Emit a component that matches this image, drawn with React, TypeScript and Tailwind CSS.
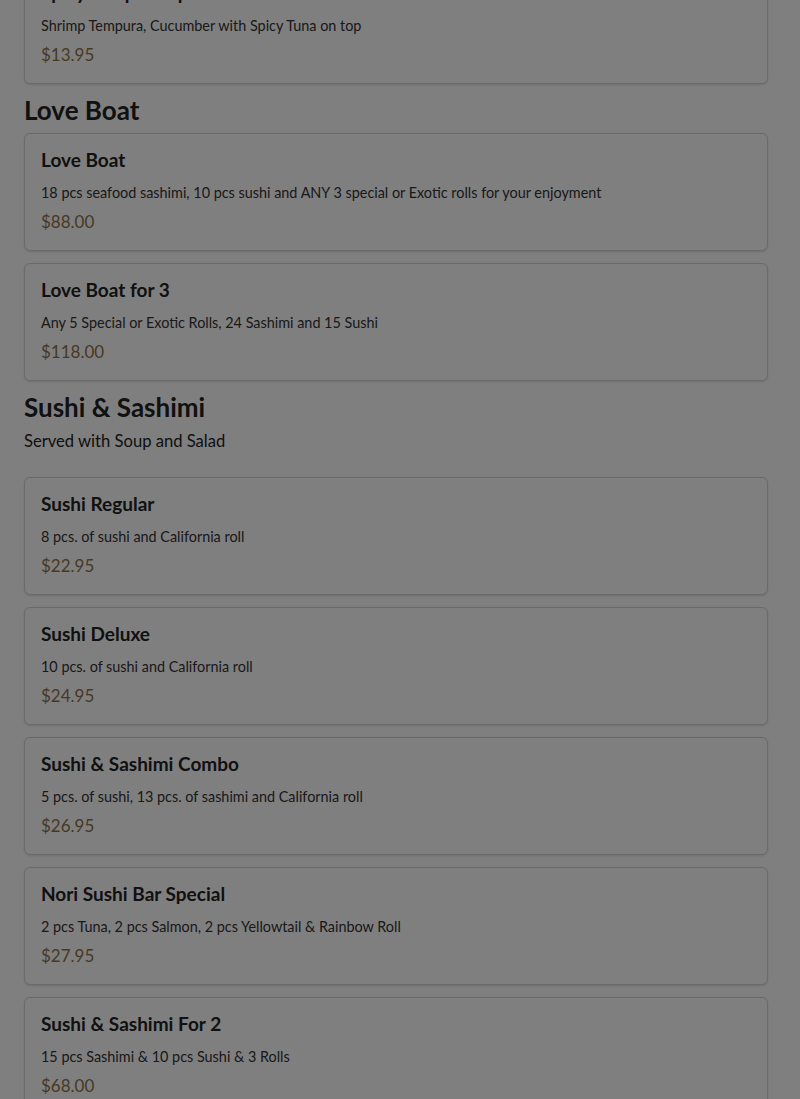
import React from 'react'

type Item = { name: string; desc: string; price: string }

const loveBoat: Item[] = [
  { name: 'Love Boat', desc: '18 pcs seafood sashimi, 10 pcs sushi and ANY 3 special or Exotic rolls for your enjoyment', price: '$88.00' },
  { name: 'Love Boat for 3', desc: 'Any 5 Special or Exotic Rolls, 24 Sashimi and 15 Sushi', price: '$118.00' },
]

const sushi: Item[] = [
  { name: 'Sushi Regular', desc: '8 pcs. of sushi and California roll', price: '$22.95' },
  { name: 'Sushi Deluxe', desc: '10 pcs. of sushi and California roll', price: '$24.95' },
  { name: 'Sushi & Sashimi Combo', desc: '5 pcs. of sushi, 13 pcs. of sashimi and California roll', price: '$26.95' },
  { name: 'Nori Sushi Bar Special', desc: '2 pcs Tuna, 2 pcs Salmon, 2 pcs Yellowtail & Rainbow Roll', price: '$27.95' },
  { name: 'Sushi & Sashimi For 2', desc: '15 pcs Sashimi & 10 pcs Sushi & 3 Rolls', price: '$68.00' },
]

function MenuCard({ item }: { item: Item }) {
  return (
    <div className="border border-[#d4d4d4] rounded-md bg-white p-4 mb-3 shadow-sm">
      <h3 className="text-[19px] leading-5 font-bold text-[#222]">{item.name}</h3>
      <p className="text-[14.4px] leading-5 text-[#333] mt-[13px]">{item.desc}</p>
      <p className="text-[17px] leading-6 text-[#8f7246] mt-[7px]">{item.price}</p>
    </div>
  )
}

export default function App() {
  return (
    <div className="relative min-h-screen bg-white overflow-hidden font-['Lato','Open_Sans',sans-serif]">
      <div className="w-[744px] ml-6 -mt-[34px]">
        <MenuCard item={{ name: 'Spicy Tempura Special', desc: 'Shrimp Tempura, Cucumber with Spicy Tuna on top', price: '$13.95' }} />

        <h2 className="text-[26px] leading-8 font-bold text-[#222] -mt-[2px] mb-[7px]">Love Boat</h2>
        {loveBoat.map((it) => (
          <MenuCard key={it.name} item={it} />
        ))}

        <h2 className="text-[26px] leading-8 font-bold text-[#222] -mt-[2px]">Sushi &amp; Sashimi</h2>
        <p className="text-[16.6px] leading-6 text-[#222] mt-[6px] mb-[24px]">Served with Soup and Salad</p>
        {sushi.map((it) => (
          <MenuCard key={it.name} item={it} />
        ))}
      </div>
      <div className="fixed inset-0 bg-black/50" />
    </div>
  )
}
